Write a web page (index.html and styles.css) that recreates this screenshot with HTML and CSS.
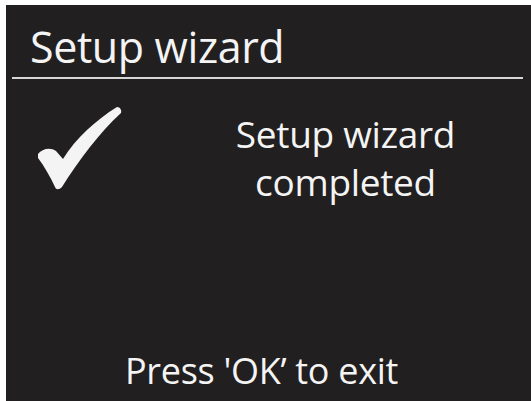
FILE: index.html
```html
<!DOCTYPE html>
<html lang="en">
<head>
<meta charset="utf-8">
<title>Setup wizard</title>
<link rel="stylesheet" href="styles.css">
</head>
<body>
<div class="screen">
  <div class="header">
    <h1 class="title">Setup wizard</h1>
  </div>
  <div class="content">
    <div class="check">
      <svg width="88" height="88" viewBox="36 104 88 88" aria-hidden="true">
        <path d="M38,154 C42,149 50,147 56,151 L63,159 C76,138 96,120 117,107 C120,107 122,110 121,113 C100,132 79,160 62,187 C59,190 56,190 55,187 C50,176 44,166 38,158 Z" fill="#f4f4f4"/>
      </svg>
    </div>
    <p class="message">Setup wizard<br>completed</p>
  </div>
  <p class="footer">Press 'OK’ to exit</p>
</div>
</body>
</html>
```

FILE: styles.css
```css
html, body {
  margin: 0;
  padding: 0;
  background: #ffffff;
}

body {
  width: 531px;
  height: 401px;
  overflow: hidden;
  font-family: "Open Sans", "Noto Sans", sans-serif;
}

.screen {
  margin: 5px 0 0 6px;
  width: 525px;
  height: 396px;
  background: #221f20;
  color: #f4f4f4;
  display: flex;
  flex-direction: column;
  box-sizing: border-box;
}

.header {
  margin: 0 8px 0 6px;
  height: 74px;
  border-bottom: 2px solid #d6d6d6;
  box-sizing: border-box;
  display: flex;
  align-items: flex-end;
}

.title {
  margin: 0 0 5px 18px;
  font-size: 43px;
  font-weight: 400;
  line-height: 50px;
  letter-spacing: -0.4px;
}

.content {
  display: flex;
  align-items: flex-start;
  padding-top: 25px;
}

.check {
  margin-left: 30px;
  width: 88px;
  height: 88px;
}

.check svg {
  display: block;
}

.message {
  flex: 1;
  margin: 6px 0 0 0;
  padding-left: 36px;
  text-align: center;
  font-size: 37px;
  line-height: 48px;
  letter-spacing: -0.3px;
}

.footer {
  margin: auto 0 0 0;
  padding: 0 14px 7px 0;
  text-align: center;
  font-size: 36px;
  line-height: 46px;
  letter-spacing: -0.3px;
}
```
